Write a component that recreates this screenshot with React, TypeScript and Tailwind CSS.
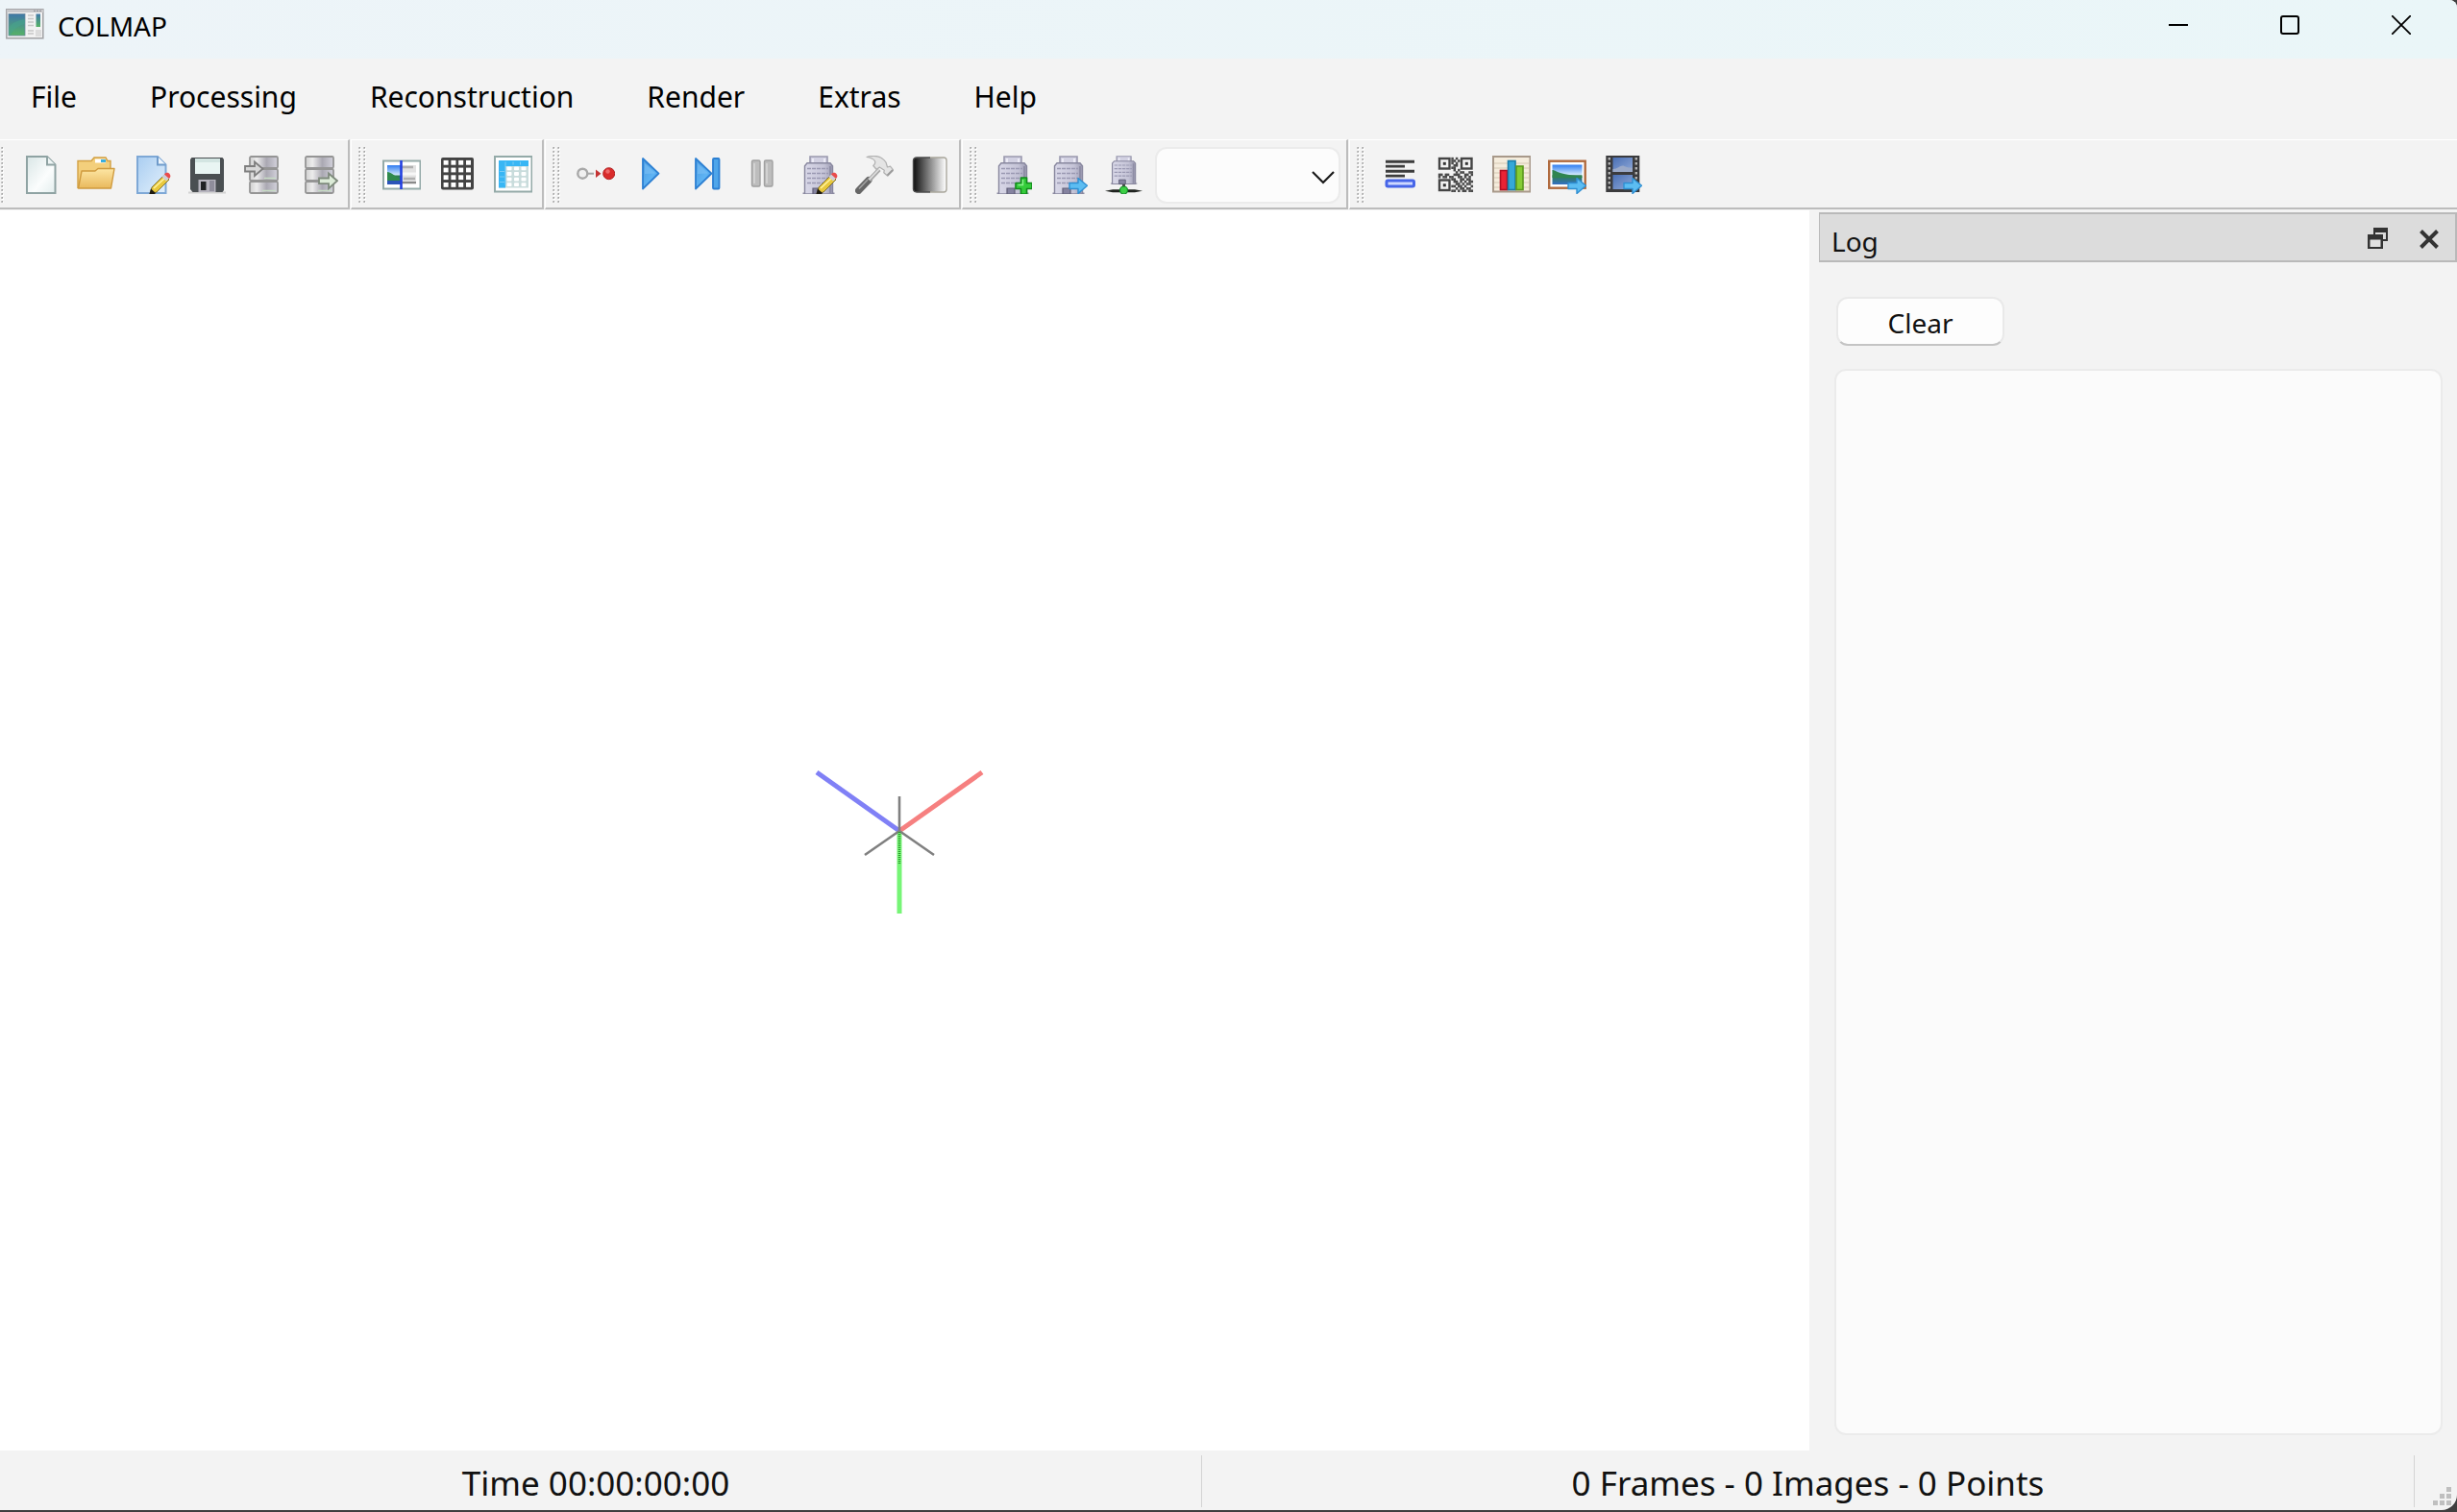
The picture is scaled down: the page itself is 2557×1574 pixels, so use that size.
import { useState } from 'react';
import type { ReactNode } from 'react';

const MENUS = ['File', 'Processing', 'Reconstruction', 'Render', 'Extras', 'Help'];

// Dark modules of the match matrix icon, without its three corner squares
const MATRIX = [
  '0000001010000000',
  '0000001101000000',
  '0000001010000000',
  '0000000110000000',
  '0000001100000000',
  '0000000101000000',
  '0000000010110011',
  '1101100111001101',
  '1011011001101010',
  '0000001100110110',
  '0000000110101011',
  '0000000011010110',
  '0000001101101001',
  '0000000010110110',
  '0000001101011011',
];

// --- ICON PARTS ---
const Icon = ({ children }: { children: ReactNode }) => (
  <svg className="w-10 h-10 block" viewBox="0 0 40 40" fill="none" aria-hidden="true">
    {children}
  </svg>
);

const Defs = () => (
  <svg className="absolute w-0 h-0" aria-hidden="true">
    <defs>
      <linearGradient id="paper" x1="0" y1="0" x2="1" y2="1">
        <stop offset="0" stopColor="#d9e6e6" />
        <stop offset="0.6" stopColor="#fbfdfd" />
        <stop offset="1" stopColor="#e3eeee" />
      </linearGradient>
      <linearGradient id="bluePaper" x1="0" y1="0" x2="1" y2="1">
        <stop offset="0" stopColor="#a9cdf1" />
        <stop offset="1" stopColor="#e2f0fc" />
      </linearGradient>
      <linearGradient id="folder" x1="0" y1="0" x2="0" y2="1">
        <stop offset="0" stopColor="#fde6a4" />
        <stop offset="1" stopColor="#e9b95c" />
      </linearGradient>
      <linearGradient id="metal" x1="0" y1="0" x2="1" y2="0">
        <stop offset="0" stopColor="#cfcfcf" />
        <stop offset="0.25" stopColor="#ececec" />
        <stop offset="0.6" stopColor="#aaa8b2" />
        <stop offset="1" stopColor="#d3d2dc" />
      </linearGradient>
      <linearGradient id="play" x1="0" y1="0" x2="1" y2="1">
        <stop offset="0" stopColor="#4a9ae0" />
        <stop offset="0.6" stopColor="#5fb4f4" />
        <stop offset="1" stopColor="#2d7ed0" />
      </linearGradient>
      <linearGradient id="wall" x1="0" y1="0" x2="1" y2="0">
        <stop offset="0" stopColor="#d9d8e8" />
        <stop offset="0.7" stopColor="#c4c3d6" />
        <stop offset="1" stopColor="#9c9bb2" />
      </linearGradient>
      <linearGradient id="ramp" x1="0" y1="0" x2="1" y2="0">
        <stop offset="0" stopColor="#111111" />
        <stop offset="1" stopColor="#ffffff" />
      </linearGradient>
      <linearGradient id="sky" x1="0" y1="0" x2="0" y2="1">
        <stop offset="0" stopColor="#2f7cf0" />
        <stop offset="0.5" stopColor="#cfe8fb" />
        <stop offset="0.55" stopColor="#2f7d4c" />
        <stop offset="1" stopColor="#3470c4" />
      </linearGradient>
      <linearGradient id="film" x1="0" y1="0" x2="1" y2="1">
        <stop offset="0" stopColor="#4a6fb4" />
        <stop offset="1" stopColor="#8fa9d8" />
      </linearGradient>
      <linearGradient id="app" x1="0" y1="0" x2="0" y2="1">
        <stop offset="0" stopColor="#3f78a8" />
        <stop offset="1" stopColor="#56b266" />
      </linearGradient>
      <pattern id="grip" width="5" height="4" patternUnits="userSpaceOnUse">
        <rect x="1" y="1" width="2" height="2" fill="#fff" />
        <rect width="1" height="2" fill="#c4c4c4" />
        <rect x="1" width="1" height="1" fill="#a3a3a3" />
        <rect x="1" y="1" width="1" height="1" fill="#b8b8b8" />
      </pattern>
    </defs>
  </svg>
);

const Pencil = () => (
  <g>
    <path d="M18 40l2-7 13-13 5 5-13 13z" fill="#e8c83c" stroke="#6b5a1c" strokeWidth="0.800" />
    <path d="M22 34l13-12" stroke="#fff3a0" strokeWidth="1.600" />
    <path d="M30.500 22l3-3 4.500 4.500-3 3z" fill="#cfcfd6" />
    <path d="M33 19.500c1-2 4-2.500 5.500-.5s1 3.500-.5 5z" fill="#ea4b4b" />
    <path d="M17.500 40l1.500-5.500 5 4.500-1 1z" fill="#1d1a10" />
  </g>
);

const Building = () => (
  <g>
    <path d="M3.500 38.500h33V40h-33z" fill="#8d8ca2" />
    <path d="M11 9V1h18v8z" fill="#d2d1e2" stroke="#9a99ae" strokeWidth="1.600" />
    <path d="M14 3v5M26 3v5" stroke="#ecebf6" strokeWidth="2" />
    <path d="M8 7.800h24l2.500 3V40h-29V10.800z" fill="url(#wall)" stroke="#88879e" strokeWidth="1.400" />
    <path d="M8 13.500h22M8 18.500h22M8 23.500h22M8 28.500h22" stroke="#9a99b2" strokeWidth="1.600" strokeDasharray="4 1" />
    <path d="M32 11v28" stroke="#8f8ea6" strokeWidth="2" />
    <path d="M14 40v-6h8v6z" fill="#8583a0" stroke="#5f5e76" strokeWidth="1.200" />
  </g>
);

const BlueArrow = () => (
  <path
    d="M21 28.500h9V23.500l9.500 7.800L30 39.500v-5h-9z"
    fill="#5cbdf2"
    stroke="#2f8fd2"
    strokeWidth="1.400"
    strokeLinejoin="round"
  />
);

const Cylinders = () => (
  <g stroke="#959595" strokeWidth="1.800">
    <rect x="6" y="1" width="29" height="12" rx="1.500" fill="url(#metal)" />
    <rect x="6" y="14" width="29" height="12" rx="1.500" fill="url(#metal)" />
    <rect x="6" y="27" width="29" height="12" rx="1.500" fill="url(#metal)" />
    <path d="M19 36.500h14M21 23.500h12" stroke="#c7dcc4" strokeWidth="1.500" />
  </g>
);

// --- TOOLBAR ICONS ---
const NewProject = () => (
  <Icon>
    <path d="M6 1h21l8.500 8.500V39H6z" fill="url(#paper)" stroke="#8fa3a3" strokeWidth="2" />
    <path d="M27 1v8.500h8.500" fill="#eef5f5" stroke="#8fa3a3" strokeWidth="2" />
  </Icon>
);

const OpenProject = () => (
  <Icon>
    <path d="M1 33V5.500h14l3-3.500h12l2 3.500h3V15z" fill="#f3cf7c" stroke="#d2a043" strokeWidth="1.400" />
    <path d="M19 3.500h11v4H19z" fill="#fff" />
    <path d="M25 4h5v3h-5z" fill="#38aee0" />
    <path d="M1.500 34l3.500-18h14l3-2.500h17L35.500 34z" fill="url(#folder)" stroke="#cf9a3e" strokeWidth="1.400" strokeLinejoin="round" />
  </Icon>
);

const EditProject = () => (
  <Icon>
    <path d="M5 1h21l8.500 8.500V39H5z" fill="url(#bluePaper)" stroke="#7ea8d6" strokeWidth="2" />
    <path d="M26 1v8.500h8.500" fill="#eef6fd" stroke="#6f9bcb" strokeWidth="2" />
    <Pencil />
  </Icon>
);

const SaveProject = () => (
  <Icon>
    <path d="M0 38.500h39" stroke="#d2d2d2" strokeWidth="2" />
    <path d="M3.500 2h32l1.500 2v32l-1.500 2H4.500L2 35V4z" fill="#4a4f52" />
    <path d="M7 3h26v16H7z" fill="#e9f5f3" />
    <path d="M7 3h26v4H7z" fill="#d3e5e2" />
    <path d="M10.500 25h18v13h-18z" fill="#b5b3bd" />
    <path d="M22 26h5v11h-5z" fill="#8f8d9b" />
    <path d="M13 27h5.500v9H13z" fill="#1f2123" />
  </Icon>
);

const ImportModel = () => (
  <Icon>
    <Cylinders />
    <path d="M1 11h10V6.500l8.500 7.200L11 21v-4.500H1z" fill="#d8d8d8" stroke="#7e7e7e" strokeWidth="1.800" />
  </Icon>
);

const ExportModel = () => (
  <Icon>
    <Cylinders />
    <path d="M20 23.500h10v-5l9 7.700-9 8v-5H20z" fill="#dcebd8" stroke="#7e8a7c" strokeWidth="1.800" />
  </Icon>
);

const FeatureExtraction = () => (
  <Icon>
    <rect x="1" y="5.500" width="38.500" height="29" fill="#fff" stroke="#94aaa8" strokeWidth="2" />
    <rect x="5" y="10" width="15" height="20" fill="url(#sky)" />
    <path d="M5 17c4 0 7 4 15 8v5H5z" fill="#2f8a4c" />
    <path d="M5 26h15v4H5z" fill="#2b54b8" />
    <rect x="20" y="10" width="15" height="20" fill="#e2e2e2" />
    <path d="M20 12h12M22 24h12" stroke="#b0b0b0" strokeWidth="2.500" />
    <path d="M20 19h15" stroke="#f7f7f7" strokeWidth="3" />
    <path d="M20 28h15" stroke="#8a8a8a" strokeWidth="2" />
    <path d="M19.500 5v30" stroke="#2340e0" strokeWidth="2.600" />
  </Icon>
);

const CELLS = [0, 1, 2, 3];

const FeatureMatching = () => (
  <Icon>
    <rect x="3" y="2" width="34" height="33.500" rx="2" fill="#434343" />
    {CELLS.map((r) => CELLS.map((c) => (
      <rect key={`${r}-${c}`} x={5.6 + c * 7.8} y={4.9 + r * 7.7} width="5" height="4.800" fill="#fff" />
    )))}
  </Icon>
);

const DatabaseManagement = () => (
  <Icon>
    <rect x="1" y="1" width="38.500" height="36.500" fill="#fff" stroke="#94aaa8" strokeWidth="2" />
    <rect x="5" y="5" width="31" height="28.500" fill="#c9dcdc" />
    <path d="M5 5h31v6H12v22.500H5z" fill="#38b6f4" />
    {CELLS.map((r) => [0, 1, 2].map((c) => (
      <rect key={`${r}-${c}`} x={13.5 + c * 7.5} y={11.5 + r * 5.6} width="5" height="3.800" rx="0.800" fill="#fff" />
    )))}
    <path d="M12 6.500v24M20 6.500v3M27.500 6.500v3M6 16.500h5M6 22h5M6 27.500h5" stroke="#78cdf7" />
  </Icon>
);

const AutomaticReconstruction = () => (
  <Icon>
    <path d="M10 18.700h8" stroke="#a5a5a5" strokeWidth="2" />
    <circle cx="6.300" cy="18.700" r="5" fill="#f0f0f0" stroke="#a8a8a8" strokeWidth="2.400" />
    <path d="M20 14.500l5.500 4.200-5.500 4.200z" fill="#c43434" />
    <circle cx="33.700" cy="18.700" r="6" fill="#d92b2b" stroke="#b22222" />
    <circle cx="32.500" cy="16.500" r="2.200" fill="#ee6a6a" />
  </Icon>
);

const StartReconstruction = () => (
  <Icon>
    <path d="M11 3v31.500l16.500-15.800z" fill="url(#play)" stroke="#2c7fd2" strokeWidth="1.800" strokeLinejoin="round" />
    <path d="M13 8v11l11-.5z" fill="#7cc0f5" fillOpacity="0.600" />
  </Icon>
);

const StepReconstruction = () => (
  <Icon>
    <path d="M8 3v31.500l16.500-15.800z" fill="url(#play)" stroke="#2c7fd2" strokeWidth="1.800" strokeLinejoin="round" />
    <path d="M10 8v11l11-.5z" fill="#7cc0f5" fillOpacity="0.600" />
    <rect x="26" y="3" width="6.500" height="31.500" rx="1" fill="#4fa6ea" stroke="#2c7fd2" strokeWidth="1.800" />
  </Icon>
);

const PauseReconstruction = () => (
  <Icon>
    <rect x="8.500" y="5" width="8.500" height="27" rx="1.500" fill="#bdbdbd" stroke="#a0a0a0" strokeWidth="1.400" />
    <rect x="21.500" y="5" width="8.500" height="27" rx="1.500" fill="#bdbdbd" stroke="#a0a0a0" strokeWidth="1.400" />
    <path d="M11 8v21M24 8v21" stroke="#d2d2d2" strokeWidth="2" />
  </Icon>
);

const ReconstructionOptions = () => (
  <Icon>
    <Building />
    <Pencil />
  </Icon>
);

const BundleAdjustment = () => (
  <Icon>
    <path d="M3.500 36.500L14 25.500" stroke="#666666" strokeWidth="7" strokeLinecap="round" />
    <path d="M4 34.500l9-9.500" stroke="#a2a2a2" strokeWidth="1.600" />
    <path d="M14.500 25.500L25 14.500" stroke="#a8a8a8" strokeWidth="4.500" />
    <path d="M14.500 25L25 14" stroke="#dedede" strokeWidth="1.800" />
    <path
      d="M12 1.500c9-2.500 16-.5 20 5.500l1.500 5 3-.8 3.300 4-6 6-4-3.500.5-2.500-5-3.200-3 2.500-3.500-4c4-3.500 2-7.500-6.800-9z"
      fill="#e4e4e4"
      stroke="#b0b0b0"
      strokeWidth="1.200"
      strokeLinejoin="round"
    />
    <path d="M33.500 20.500l5.500-5.500" stroke="#9a9a9a" strokeWidth="1.800" />
  </Icon>
);

const DenseReconstruction = () => (
  <Icon>
    <rect x="3" y="3" width="33.500" height="34" rx="3" fill="url(#ramp)" stroke="url(#ramp)" strokeWidth="2" />
    <path d="M20 2h14q3 0 3 3v30q0 3-3 3H20" stroke="#a9a69c" strokeWidth="1.400" />
    <path d="M20 2H6Q3 2 2.500 5v30q.5 3 3.500 3h14" stroke="#4b4b4b" strokeWidth="1.400" />
  </Icon>
);

const AddModel = () => (
  <Icon>
    <Building />
    <path
      d="M28.500 23h6v5.500h5.500v6h-5.500V40h-6v-5.500H23v-6h5.500z"
      fill="#35cc3b"
      stroke="#128a1c"
      strokeWidth="1.600"
      strokeLinejoin="round"
    />
    <path d="M30.500 25v5.500h-5" stroke="#8af08c" strokeWidth="1.400" />
  </Icon>
);

const NextModel = () => (
  <Icon>
    <Building />
    <BlueArrow />
  </Icon>
);

const MergeModels = () => (
  <Icon>
    <g transform="translate(3 0) scale(0.830 0.740)">
      <Building />
    </g>
    <path d="M0 36.700l8-1.500h23l8 1.500-8 1.500H8z" fill="#1f231f" />
    <path d="M19.500 30v5" stroke="#4a4a4a" strokeWidth="3" />
    <circle cx="19.500" cy="36" r="4" fill="#3ccf45" stroke="#16892a" strokeWidth="1.200" />
  </Icon>
);

const ShowLog = () => (
  <Icon>
    <path d="M5 6.200h30M5 16.200h30" stroke="#3d3d3d" strokeWidth="3" />
    <path d="M5 11.200h20M5 21.200h20" stroke="#3d3d3d" strokeWidth="2.800" />
    <rect x="6" y="26" width="28.500" height="6" rx="1.500" fill="#cdd8ff" stroke="#4665e8" strokeWidth="3" />
  </Icon>
);

const CORNERS = [[3, 3], [26, 3], [3, 25.5]];

const MatchMatrix = () => (
  <Icon>
    {CORNERS.map(([x, y]) => (
      <g key={`${x}-${y}`}>
        <rect x={x} y={y} width="10.500" height="10.500" stroke="#454545" strokeWidth="2.400" />
        <rect x={x + 3.8} y={y + 3.8} width="3" height="3" fill="#333" />
      </g>
    ))}
    {MATRIX.map((row, y) => row.split('').map((bit, x) => (
      bit === '1' && (
        <rect key={`${x}-${y}`} x={1.8 + x * 2.25} y={1.8 + y * 2.4} width="2.500" height="2.600" fill="#4a4a4a" />
      )
    )))}
  </Icon>
);

const ModelStatistics = () => (
  <Icon>
    <rect x="1" y="1" width="38.500" height="36.500" fill="#f5ecdc" stroke="#a8998a" strokeWidth="2" />
    <path d="M2 8h36M2 13h36M2 18h36M2 23h36M2 28h36M2 33h36" stroke="#d6c8b2" strokeWidth="1.200" />
    <rect x="8.500" y="15.500" width="7" height="20" fill="#ea2335" stroke="#b00f22" strokeWidth="1.600" />
    <rect x="16.500" y="5.500" width="7.500" height="30" fill="#35a8d8" stroke="#1b7ca8" strokeWidth="1.600" />
    <rect x="25" y="11" width="7" height="24.500" fill="#86cc34" stroke="#5a981c" strokeWidth="1.600" />
  </Icon>
);

const GrabImage = () => (
  <Icon>
    <rect x="1.200" y="5.700" width="37.500" height="28" fill="#fff" stroke="#b06a3e" strokeWidth="2.400" />
    <rect x="4.500" y="9.500" width="31" height="20.500" fill="url(#sky)" />
    <path d="M4.500 15c4 0 6 5 31 6.500v1.500h-31z" fill="#2f8550" />
    <BlueArrow />
  </Icon>
);

const GrabMovie = () => (
  <Icon>
    <rect x="2.300" y="0" width="35" height="38" fill="#3b3b3d" />
    <rect x="9.500" y="2" width="20.500" height="15" fill="url(#film)" />
    <path d="M9.500 14c6 0 8-5 12-3s5 1 8.500 2v4H9.500z" fill="#9aa9c8" />
    <rect x="9.500" y="20" width="20.500" height="15" fill="url(#film)" />
    <path d="M5.800 2v35M33.800 2v35" stroke="#b4b4b4" strokeWidth="2.400" strokeDasharray="2.500 2.500" />
    <BlueArrow />
  </Icon>
);

type Tool = { label: string; icon: ReactNode; disabled?: boolean };

const FILE_TOOLS: Tool[] = [
  { label: 'New project', icon: <NewProject /> },
  { label: 'Open project', icon: <OpenProject /> },
  { label: 'Edit project', icon: <EditProject /> },
  { label: 'Save project', icon: <SaveProject /> },
  { label: 'Import model', icon: <ImportModel /> },
  { label: 'Export model', icon: <ExportModel /> },
];

const PREPROCESSING_TOOLS: Tool[] = [
  { label: 'Feature extraction', icon: <FeatureExtraction /> },
  { label: 'Feature matching', icon: <FeatureMatching /> },
  { label: 'Database management', icon: <DatabaseManagement /> },
];

const RECONSTRUCTION_TOOLS: Tool[] = [
  { label: 'Automatic reconstruction', icon: <AutomaticReconstruction /> },
  { label: 'Start reconstruction', icon: <StartReconstruction /> },
  { label: 'Reconstruct next image', icon: <StepReconstruction /> },
  { label: 'Pause reconstruction', icon: <PauseReconstruction />, disabled: true },
  { label: 'Reconstruction options', icon: <ReconstructionOptions /> },
  { label: 'Bundle adjustment', icon: <BundleAdjustment /> },
  { label: 'Dense reconstruction', icon: <DenseReconstruction /> },
];

const RENDER_TOOLS: Tool[] = [
  { label: 'Render', icon: <AddModel /> },
  { label: 'Show model', icon: <NextModel /> },
  { label: 'Render options', icon: <MergeModels /> },
];

const EXTRA_TOOLS: Tool[] = [
  { label: 'Show log', icon: <ShowLog /> },
  { label: 'Match matrix', icon: <MatchMatrix /> },
  { label: 'Model statistics', icon: <ModelStatistics /> },
  { label: 'Grab image', icon: <GrabImage /> },
  { label: 'Grab movie', icon: <GrabMovie /> },
];

// --- TOOLBAR SECTION ---
const ToolSection = ({ tools, first, last, children }: { tools: Tool[]; first?: boolean; last?: boolean; children?: ReactNode }) => (
  <div
    className={`flex items-center border-t border-t-white border-b-2 border-b-[#bcbcbc] pt-0.5 ${
      last ? 'flex-1 border-l border-l-white' : 'border-r-2 border-r-[#bcbcbc] pr-2.5'
    } ${first ? '' : 'ml-px border-l border-l-white'}`}
  >
    <svg className={`h-[58px] shrink-0 ${first ? 'w-[3px] ml-px mr-[18px]' : 'w-2 ml-[7px] mr-[17px]'}`} aria-hidden="true">
      <rect width="100%" height="100%" fill="url(#grip)" />
    </svg>
    <div className="flex gap-[18px]">
      {tools.map((t) => (
        <button key={t.label} type="button" aria-label={t.label} title={t.label} disabled={t.disabled}>
          {t.icon}
        </button>
      ))}
    </div>
    {children}
  </div>
);

export default function App() {
  const [log, setLog] = useState('');

  return (
    <div className="bg-[#3f3f3f] min-h-screen flex flex-col">
      <Defs />
      <div className="flex-1 flex flex-col bg-[#f3f3f3] mb-0.5 rounded-tr-lg rounded-br-2xl overflow-hidden font-['Noto_Sans','Open_Sans',sans-serif] text-[#111111]">

        {/* TITLE BAR */}
        <header className="flex items-start justify-between bg-gradient-to-r from-[#edf4f8] to-[#eaf6f8] text-black">
          <div className="flex items-start pl-1.5 pt-[9px] pb-4">
            <svg className="w-10 h-8 mr-3.5 shrink-0" viewBox="0 0 40 32" aria-hidden="true">
              <rect x="0.800" y="0.800" width="38" height="30" fill="#f2f2f2" stroke="#a5a5a8" strokeWidth="1.600" />
              <path d="M1 1h38v3H1z" fill="#c9c9cc" />
              <path d="M29 2.300h8" stroke="#8d8d92" strokeDasharray="2 1" />
              <rect x="3" y="5.500" width="17" height="22.500" fill="url(#app)" stroke="#6f8aa0" strokeWidth="0.800" />
              <path d="M3 20c4-6 10-8 17-9v5c-6 1-12 5-15 12H3z" fill="#47a38c" fillOpacity="0.600" />
              <path d="M23 7h6M23 10.500h6M23 14h6M23 17.500h6M23 23h6M23 26h6" stroke="#c6c6c6" strokeWidth="1.400" />
              <rect x="31.500" y="5.500" width="4.500" height="13.500" fill="url(#app)" />
              <path d="M31 22h6v7h-6z" fill="#dcdcdc" />
            </svg>
            <h1 className="text-[28px] leading-9">COLMAP</h1>
          </div>
          <div className="flex">
            <button type="button" aria-label="Minimize" className="px-12 pt-4 pb-6">
              <svg className="w-5 h-5" viewBox="0 0 20 20" fill="none" stroke="#000" strokeWidth="2">
                <path d="M0 10h20" />
              </svg>
            </button>
            <button type="button" aria-label="Maximize" className="px-12 pt-4 pb-6">
              <svg className="w-5 h-5" viewBox="0 0 20 20" fill="none" stroke="#000" strokeWidth="2">
                <rect x="1" y="1" width="18" height="18" rx="2" />
              </svg>
            </button>
            <button type="button" aria-label="Close window" className="px-12 pt-4 pb-6">
              <svg className="w-5 h-5" viewBox="0 0 20 20" fill="none" stroke="#000" strokeWidth="1.800">
                <path d="M0 0l20 20M20 0L0 20" />
              </svg>
            </button>
          </div>
        </header>

        {/* MENU BAR */}
        <nav className="flex gap-[76px] pl-8 pt-5 pb-6 text-black">
          {MENUS.map((m) => (
            <button key={m} type="button" className="text-[30px] leading-10">{m}</button>
          ))}
        </nav>

        {/* TOOLBAR */}
        <div className="flex h-[73px] mb-px">
          <ToolSection tools={FILE_TOOLS} first />
          <ToolSection tools={PREPROCESSING_TOOLS} />
          <ToolSection tools={RECONSTRUCTION_TOOLS} />
          <ToolSection tools={RENDER_TOOLS}>
            <div className="relative ml-3 -mr-1">
              <select
                aria-label="Model"
                className="appearance-none block w-[193px] h-[59px] rounded-xl border-2 border-[#ebebeb] bg-[#fcfcfc] text-[28px] pl-4 pr-12"
              >
                <option value="" />
              </select>
              <svg className="absolute right-1.5 top-[25px] w-6 h-3.5 pointer-events-none" viewBox="0 0 24 14" fill="none" stroke="#1a1a1a" strokeWidth="2.200">
                <path d="M1 1l11 11L23 1" />
              </svg>
            </div>
          </ToolSection>
          <ToolSection tools={EXTRA_TOOLS} last />
        </div>

        {/* WORKSPACE */}
        <div className="flex-1 flex">
          <main className="flex-1 bg-white flex items-center justify-center pr-[11px]" aria-label="Model viewer">
            <svg className="w-[180px] h-[180px]" viewBox="-90 -90 180 180" fill="none">
              <path d="M0 0L-86-61" stroke="#8080f6" strokeWidth="5" />
              <path d="M0 0L86-61" stroke="#f68080" strokeWidth="5" />
              <path d="M0 0V86" stroke="#76f576" strokeWidth="5" />
              <path d="M0 0V-36M0 0L-36 25M0 0L36 25" stroke="#808080" strokeWidth="2.600" />
              <path d="M0 1V34" stroke="#2f9a2f" strokeWidth="2.600" strokeDasharray="1 1" />
            </svg>
          </main>

          {/* LOG DOCK */}
          <aside className="w-[674px] shrink-0 flex flex-col pt-0.5">
            <div className="ml-2.5 flex items-start justify-between bg-[#dcdcdc] border-y-2 border-r-2 border-l border-[#b9b9b9] pl-3 pr-4 pt-2 pb-1">
              <h2 className="text-[28px] leading-9 pt-0.5 -mb-0.5">Log</h2>
              <div className="flex gap-[31px] pt-1.5">
                <button type="button" aria-label="Float">
                  <svg className="w-[22px] h-[22px] block" viewBox="0 0 22 22" fill="none">
                    <path d="M6 0h15v14h-5v-2h3V5H8v2H6z" fill="#333" />
                    <path d="M8 5h11v7h-3V7H8z" fill="#dcdcdc" />
                    <path d="M0 7h16v15H0z" fill="#333" />
                    <path d="M2.500 12.500h11v7.500h-11z" fill="#e2e2e2" />
                  </svg>
                </button>
                <button type="button" aria-label="Close log">
                  <svg className="w-[22px] h-[22px] block" viewBox="0 0 22 22" fill="none" stroke="#333" strokeWidth="4">
                    <path d="M2.500 3.500l17 17M19.500 3.500l-17 17" />
                  </svg>
                </button>
              </div>
            </div>
            <div className="flex-1 flex flex-col items-start pl-[26px] pr-[15px] pt-9 pb-4">
              <button
                type="button"
                onClick={() => setLog('')}
                className="ml-0.5 w-[175px] text-[28px] leading-9 pt-[7px] pb-1 rounded-xl border-2 border-[#e9e9e9] border-b-[#c4c4c4] bg-[#fdfdfd]"
              >
                Clear
              </button>
              <textarea
                readOnly
                aria-label="Log output"
                value={log}
                className="mt-6 w-full flex-1 resize-none rounded-xl border-2 border-[#ebebeb] bg-[#fbfbfb] p-3 text-[28px] outline-none"
              />
            </div>
          </aside>
        </div>

        {/* STATUS BAR */}
        <footer className="flex items-stretch pt-[5px] pb-[3px] text-[35px] leading-[46px] text-center">
          <p className="flex-[1240] border-r border-[#d4d4d4] pt-1.5 pb-0.5 pr-2.5">Time 00:00:00:00</p>
          <p className="flex-[1261] border-r border-[#d4d4d4] pt-1.5 pb-0.5">0 Frames - 0 Images - 0 Points</p>
          <div className="w-11 flex items-end justify-end pr-1.5 pb-0.5">
            <svg className="w-5 h-5" viewBox="0 0 20 20" fill="#bfbfbf" aria-hidden="true">
              <path d="M15 1h5v5h-5zM8 8h5v5H8zM15 8h5v5h-5zM1 15h5v5H1zM8 15h5v5H8zM15 15h5v5h-5z" />
            </svg>
          </div>
        </footer>
      </div>
    </div>
  );
}
